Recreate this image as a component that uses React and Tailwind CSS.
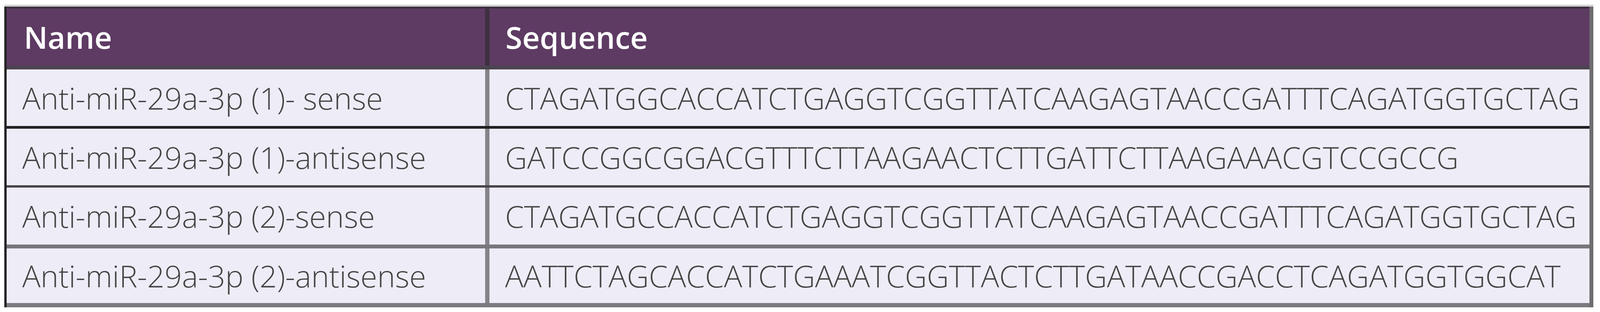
const rows = [
  {
    name: 'Anti-miR-29a-3p (1)- sense',
    seq: 'CTAGATGGCACCATCTGAGGTCGGTTATCAAGAGTAACCGATTTCAGATGGTGCTAG',
    border: 'h-[152px] border-b-[7px] border-b-[#242124]',
  },
  {
    name: 'Anti-miR-29a-3p (1)-antisense',
    seq: 'GATCCGGCGGACGTTTCTTAAGAACTCTTGATTCTTAAGAAACGTCCGCCG',
    border: 'h-[151px] border-b-[6px] border-b-[#48444a]',
  },
  {
    name: 'Anti-miR-29a-3p (2)-sense',
    seq: 'CTAGATGCCACCATCTGAGGTCGGTTATCAAGAGTAACCGATTTCAGATGGTGCTAG',
    border: 'h-[156px] border-b-[10px] border-b-[#78767a]',
  },
  {
    name: 'Anti-miR-29a-3p (2)-antisense',
    seq: 'AATTCTAGCACCATCTGAAATCGGTTACTCTTGATAACCGACCTCAGATGGTGGCAT',
    border: 'h-[151px] border-b-[11px] border-b-[#7c7a7e]',
  },
];

export default function App() {
  return (
    <div className="w-full h-[800px] overflow-hidden bg-white pt-[12px] pl-[11px] pr-[17px] font-['Open_Sans',sans-serif]">
      <div className="h-[5px] bg-[#d3d3d3]" />
      <div className="border-l-[6px] border-l-[#262326] border-r-[10px] border-r-[#6f6d70]">
        {/* header */}
        <div className="flex h-[161px] bg-[#5e3b63] border-t-[5px] border-t-[#3e3040] border-b-[10px] border-b-[#4b4450] text-white text-[78px] font-semibold leading-none">
          <div className="w-[1236px] shrink-0 flex items-center pl-[44px] border-r-[11px] border-r-[#3d2f40]">
            Name
          </div>
          <div className="min-w-0 flex items-center pl-[41px]">Sequence</div>
        </div>

        {rows.map((r) => (
          <div
            key={r.name}
            className={`flex bg-[#eeecf6] text-[#454545] text-[78px] font-light leading-none ${r.border}`}
          >
            <div className="w-[1236px] shrink-0 flex items-center pl-[40px] border-r-[11px] border-r-[#858289]">
              {r.name}
            </div>
            <div className="min-w-0 flex items-center pl-[40px] whitespace-nowrap">{r.seq}</div>
          </div>
        ))}
      </div>
    </div>
  );
}
